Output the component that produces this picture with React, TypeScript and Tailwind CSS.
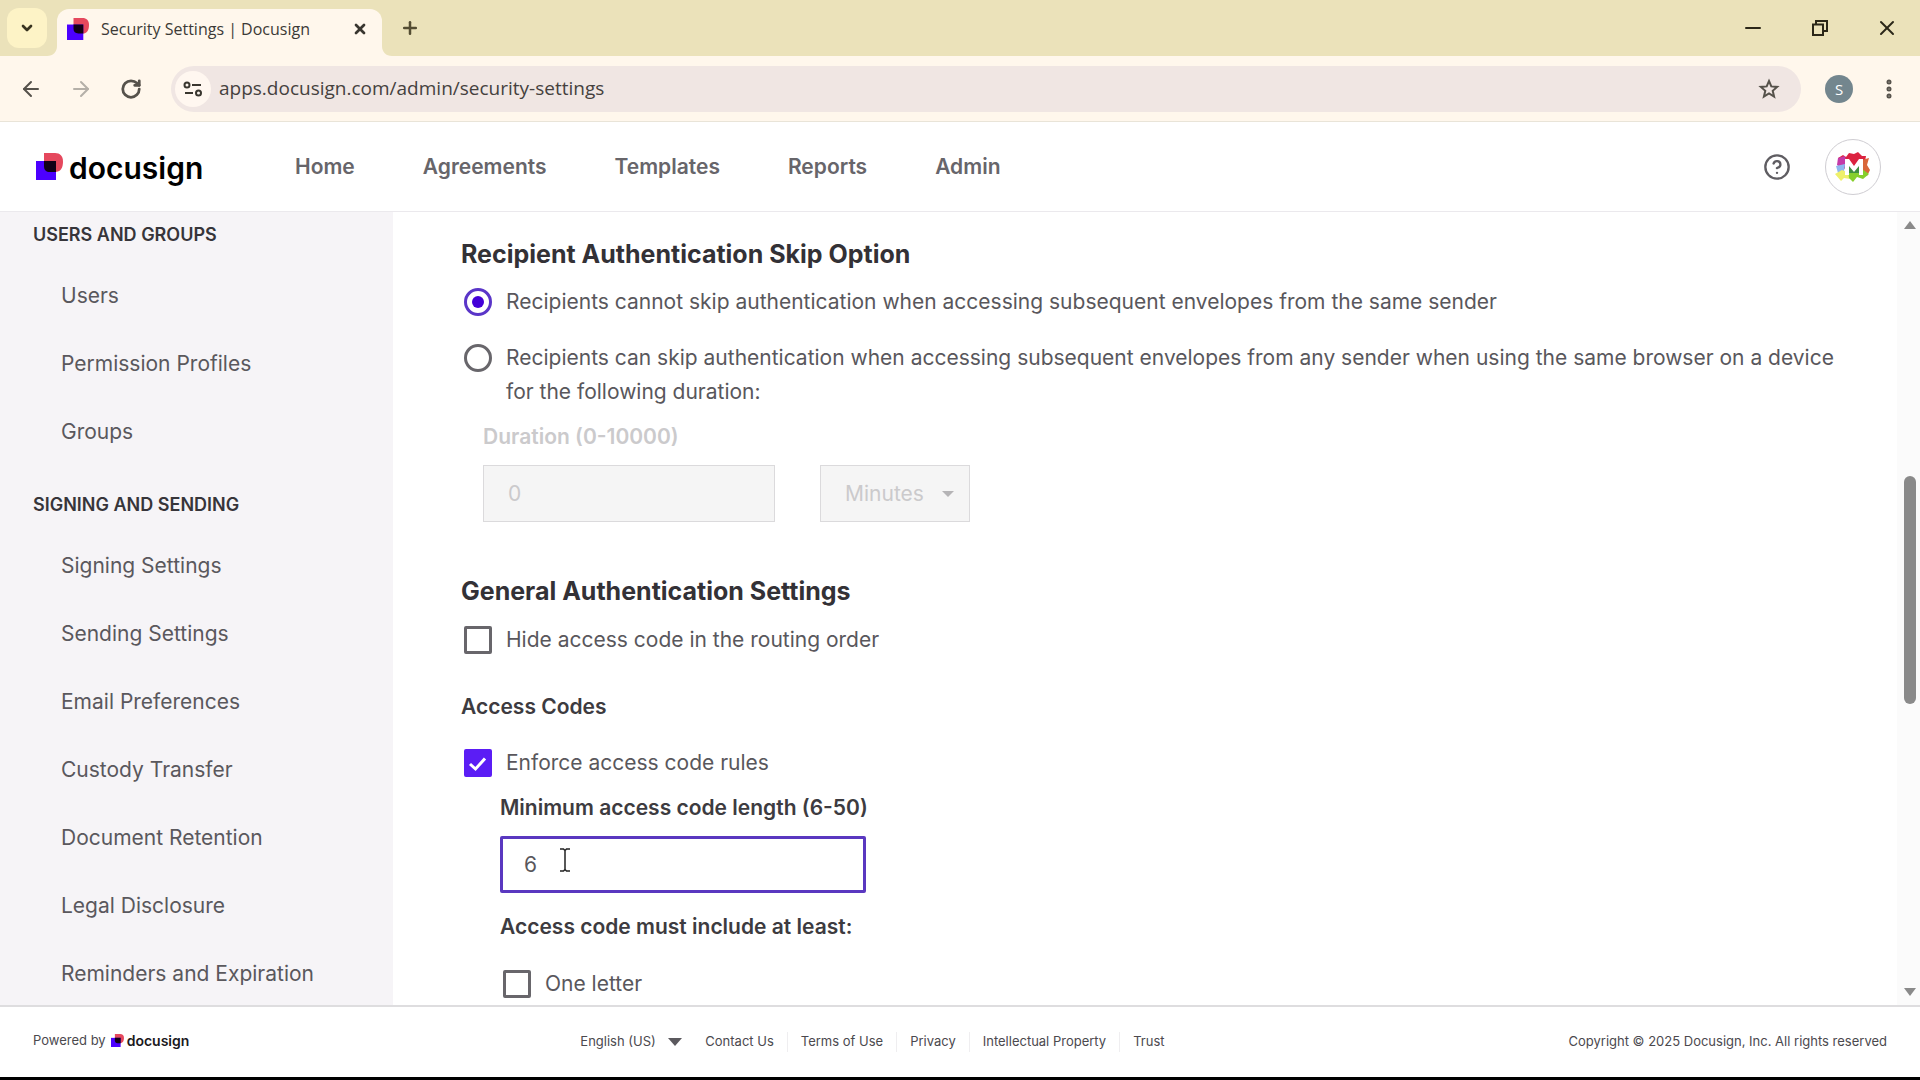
import { ArrowLeft, ArrowRight, ChevronDown, CircleHelp, EllipsisVertical, Minus, Plus, RotateCw, Star, X } from "lucide-react";

const navItems = ["Home", "Agreements", "Templates", "Reports", "Admin"];

const sidebarSections = [
  { title: "USERS AND GROUPS", items: ["Users", "Permission Profiles", "Groups"] },
  {
    title: "SIGNING AND SENDING",
    items: [
      "Signing Settings",
      "Sending Settings",
      "Email Preferences",
      "Custody Transfer",
      "Document Retention",
      "Legal Disclosure",
      "Reminders and Expiration",
    ],
  },
];

const footerLinks = ["Contact Us", "Terms of Use", "Privacy", "Intellectual Property", "Trust"];

function Mark({ className }: { className: string }) {
  return (
    <svg viewBox="0 0 27 27" className={className} aria-hidden="true">
      <path d="M8 0H19C24 0 27 3 27 8.500C27 15 24.500 19 19 19H8Z" fill="#e5485d" />
      <path d="M0 8H20V27H0Z" fill="#4c00ff" />
      <path d="M8 8H20V19H14C10 19 8 17 8 13Z" fill="#120016" />
    </svg>
  );
}

function BrowserChrome() {
  return (
    <div className="shrink-0 font-['Open_Sans',sans-serif]">
      <div className="flex h-14 items-end bg-[#ebe2ba]">
        <button aria-label="Search tabs" className="mb-2 ml-[7px] flex h-10 w-10 items-center justify-center rounded-xl bg-[#fdf3c6]">
          <ChevronDown className="h-4 w-4 text-[#39331f]" strokeWidth={4} />
        </button>
        <svg viewBox="0 0 10 10" className="h-[10px] w-[10px]" aria-hidden="true">
          <path d="M10 0V10H0C6 10 10 6 10 0Z" fill="#fff7ec" />
        </svg>
        <div className="flex h-[47px] w-[325px] items-center rounded-t-xl bg-[#fff7ec] pr-[14px] pb-2 pl-[10px]">
          <Mark className="h-[22px] w-[22px]" />
          <span className="ml-3 flex-1 text-[16px] text-[#3c3a36]">Security Settings | Docusign</span>
          <button aria-label="Close tab">
            <X className="h-4 w-4 text-[#39362f]" strokeWidth={4} />
          </button>
        </div>
        <svg viewBox="0 0 10 10" className="h-[10px] w-[10px]" aria-hidden="true">
          <path d="M0 0V10H10C4 10 0 6 0 0Z" fill="#fff7ec" />
        </svg>
        <button aria-label="New tab" className="mb-[18px] ml-2">
          <Plus className="h-5 w-5 text-[#544d33]" strokeWidth={3} />
        </button>
        <div className="mb-4 ml-auto flex items-center gap-[45px] pr-[21px] text-[#2b2718]">
          <button aria-label="Minimize">
            <Minus className="h-6 w-6" strokeWidth={2} />
          </button>
          <button aria-label="Restore">
            <svg viewBox="0 0 20 20" className="h-5 w-5" fill="none" stroke="currentColor" strokeWidth="2">
              <path d="M3 6.500H13V17H3Z" />
              <path d="M6 6V3H17V13H13.500" />
            </svg>
          </button>
          <button aria-label="Close">
            <X className="h-6 w-6" strokeWidth={2} />
          </button>
        </div>
      </div>

      <div className="flex h-[66px] items-center border-b border-[#e9e4d8] bg-[#fff7ec] pr-[19px] pl-[19px] text-[#56524b]">
        <button aria-label="Back">
          <ArrowLeft className="h-6 w-6" strokeWidth={2} />
        </button>
        <button aria-label="Forward" className="ml-[26px] text-[#b5b0a8]">
          <ArrowRight className="h-6 w-6" strokeWidth={2} />
        </button>
        <button aria-label="Reload" className="ml-[27px]">
          <RotateCw className="h-[22px] w-[22px]" strokeWidth={3} />
        </button>
        <div className="ml-[29px] flex h-[46px] flex-1 items-center rounded-full bg-[#f0e6e3] pr-[21px] pl-1">
          <button aria-label="View site information" className="flex h-9 w-9 items-center justify-center rounded-full bg-[#fff7f0]">
            <svg viewBox="0 0 20 20" className="h-5 w-5" fill="none" stroke="#39362f" strokeWidth="2">
              <circle cx="4" cy="6" r="2.500" />
              <path d="M9 6H18M2 14H10" />
              <circle cx="15.500" cy="14" r="2.500" />
            </svg>
          </button>
          <input
            aria-label="Address"
            defaultValue="apps.docusign.com/admin/security-settings"
            className="ml-2 flex-1 bg-transparent text-[19px] text-[#45413e] outline-none"
          />
          <button aria-label="Bookmark this tab">
            <svg viewBox="0 0 22 22" className="h-[22px] w-[22px]" fill="none" stroke="currentColor" strokeWidth="2">
              <path d="M11 3L13.300 8.400L19.200 8.900L14.700 12.800L16.100 18.600L11 15.500L5.900 18.600L7.300 12.800L2.800 8.900L8.700 8.400Z" />
            </svg>
          </button>
        </div>
        <button aria-label="Profile" className="ml-6 h-7 w-7 rounded-full bg-[#73868e] text-[15px] leading-7 text-white">
          S
        </button>
        <button aria-label="Menu" className="ml-6">
          <EllipsisVertical className="h-6 w-6" strokeWidth={3} />
        </button>
      </div>
    </div>
  );
}

function AccountLogo() {
  return (
    <svg viewBox="0 0 36 30" className="h-[30px] w-9" aria-hidden="true">
      <path d="M3 6L8 3L11 5L14 1L19 2L23 0L27 4L31 4L29 15L18 18L6 16Z" fill="#dc2340" />
      <path d="M3 6L10 4L12 14L8 17L2 13Z" fill="#c43aa8" />
      <path d="M1 14L10 12L9 20L3 21Z" fill="#8fb8ee" />
      <path d="M27 8L34 6L32 13L35 18L32 24L26 22Z" fill="#d9663a" />
      <path d="M0 22L7 18L14 21L15 27L9 26L6 29Z" fill="#eef06a" />
      <path d="M13 17L27 17L34 22L28 27L22 25L18 30L14 26Z" fill="#86cf2c" />
      <path d="M14 14L19 17L24 13V21H14Z" fill="#3f8f3f" />
      <path d="M10 23V7H14L19 14L24 7H28V23H24V14L19 20L14 14V23Z" fill="#fff" />
    </svg>
  );
}

function TopNav() {
  return (
    <header className="flex h-[90px] shrink-0 items-center border-b border-[#ebe9ed] bg-white pr-[39px] pl-9">
      <a href="#home" className="flex w-[259px] items-center gap-[6px]">
        <Mark className="h-[27px] w-[27px]" />
        <span className="pt-0.5 text-[30px] leading-9 font-semibold text-black">docusign</span>
      </a>
      <nav className="flex gap-[68px] text-[21px] font-semibold text-[#67656a]">
        {navItems.map((item) => (
          <a key={item} href={`#${item.toLowerCase()}`}>{item}</a>
        ))}
      </nav>
      <div className="ml-auto flex items-center gap-[34px]">
        <button aria-label="Help">
          <CircleHelp className="h-7 w-7 text-[#5f5d62]" strokeWidth={2} />
        </button>
        <button aria-label="Account" className="flex h-14 w-14 items-center justify-center rounded-full border border-[#cfcdd2]">
          <AccountLogo />
        </button>
      </div>
    </header>
  );
}

function Sidebar() {
  return (
    <aside className="flex w-[393px] shrink-0 flex-col gap-[17px] overflow-hidden bg-[#f6f4f7] pt-px">
      {sidebarSections.map((section) => (
        <section key={section.title}>
          <h2 className="mb-[5px] pl-[33px] text-[18px] leading-[44px] font-semibold text-[#37353a]">{section.title}</h2>
          <ul className="pl-[61px] text-[21px] leading-[68px] text-[#5a585d]">
            {section.items.map((item) => (
              <li key={item}>
                <a href="#settings">{item}</a>
              </li>
            ))}
          </ul>
        </section>
      ))}
    </aside>
  );
}

function Radio({ id, label, checked }: { id: string; label: string; checked?: boolean }) {
  return (
    <div className="flex gap-[14px] pl-[3px]">
      <input
        type="radio"
        id={id}
        name="skip"
        defaultChecked={checked}
        className="mt-[3px] h-7 w-7 shrink-0 appearance-none rounded-full border-3 border-[#68666b] bg-white bg-clip-content p-[5px] checked:border-[#5a35c8] checked:bg-[#4300d8]"
      />
      <label htmlFor={id}>{label}</label>
    </div>
  );
}

function Checkbox({ id, label, checked }: { id: string; label: string; checked?: boolean }) {
  return (
    <div className="flex gap-[14px] pl-[3px]">
      <span className="relative mt-[3px] h-7 w-7 shrink-0">
        <input
          type="checkbox"
          id={id}
          defaultChecked={checked}
          className="peer block h-7 w-7 appearance-none rounded-xs border-[3px] border-[#68666b] bg-white checked:border-[#5b1df5] checked:bg-[#5b1df5]"
        />
        <svg viewBox="0 0 28 28" className="pointer-events-none absolute inset-0 hidden peer-checked:block" fill="none" stroke="#fff" strokeWidth="3">
          <path d="M6 15L11.500 20L21 9.500" />
        </svg>
      </span>
      <label htmlFor={id}>{label}</label>
    </div>
  );
}

function Settings() {
  return (
    <main className="min-w-0 flex-1 overflow-hidden bg-white pt-[25px] pr-[60px] pl-[68px] text-[21px] leading-[34px] text-[#59575c]">
      <h2 className="text-[25px] font-bold text-[#333136]">Recipient Authentication Skip Option</h2>
      <div className="mt-[14px] flex flex-col gap-[22px]">
        <Radio id="no-skip" checked label="Recipients cannot skip authentication when accessing subsequent envelopes from the same sender" />
        <Radio
          id="can-skip"
          label="Recipients can skip authentication when accessing subsequent envelopes from any sender when using the same browser on a device for the following duration:"
        />
      </div>
      <div className="mt-[11px] pl-[22px] text-[#cbcacc]">
        <label htmlFor="duration" className="font-semibold">Duration (0-10000)</label>
        <div className="mt-[11px] flex gap-[45px]">
          <input id="duration" disabled defaultValue="0" className="h-[57px] w-[292px] border border-[#dbdadc] bg-[#f5f5f5] px-6" />
          <div className="relative">
            <select aria-label="Duration unit" disabled className="h-[57px] w-[150px] appearance-none border border-[#dbdadc] bg-[#f5f5f5] pl-6 opacity-100">
              <option>Minutes</option>
            </select>
            <svg viewBox="0 0 12 6" className="pointer-events-none absolute top-[26px] right-4 h-[6px] w-3" fill="#b5b4b6">
              <path d="M0 0H12L6 6Z" />
            </svg>
          </div>
        </div>
      </div>

      <h2 className="mt-[52px] text-[25px] font-bold text-[#333136]">General Authentication Settings</h2>
      <div className="mt-[15px]">
        <Checkbox id="hide-code" label="Hide access code in the routing order" />
      </div>
      <h3 className="mt-[33px] font-semibold text-[#3d3b40]">Access Codes</h3>
      <div className="mt-[22px]">
        <Checkbox id="enforce" checked label="Enforce access code rules" />
      </div>
      <div className="mt-[11px] pl-[39px]">
        <label htmlFor="min-length" className="block font-semibold text-[#3d3b40]">Minimum access code length (6-50)</label>
        <div className="relative mt-[11px] w-[366px]">
          <input id="min-length" defaultValue="6" className="block h-[57px] w-full rounded-xs border-[3px] border-[#5a38c0] px-[21px] outline-none" />
          <svg viewBox="0 0 12 24" className="pointer-events-none absolute top-3 left-[59px] h-6 w-3" fill="none" stroke="#222" strokeWidth="1.500">
            <path d="M1 1H4.500L6 2.500L7.500 1H11M6 2.500V21.500M1 23H4.500L6 21.500L7.500 23H11" />
          </svg>
        </div>
        <p className="mt-[17px] font-semibold text-[#3d3b40]">Access code must include at least:</p>
        <div className="mt-[23px]">
          <Checkbox id="one-letter" label="One letter" />
        </div>
      </div>
    </main>
  );
}

function Scrollbar() {
  return (
    <div className="flex w-[23px] shrink-0 flex-col items-center bg-[#fbfbfb] pt-[9px] pb-[9px] pl-[3px]" aria-hidden="true">
      <svg viewBox="0 0 12 8" className="h-2 w-3" fill="#8a8a8a">
        <path d="M6 0L12 8H0Z" />
      </svg>
      <div className="flex-[247]" />
      <div className="w-3 flex-[228] rounded-full bg-[#8a8a8a]" />
      <div className="flex-[284]" />
      <svg viewBox="0 0 12 8" className="h-2 w-3" fill="#8a8a8a">
        <path d="M0 0H12L6 8Z" />
      </svg>
    </div>
  );
}

function Footer() {
  return (
    <footer className="flex h-[72px] shrink-0 items-center justify-between border-t-2 border-[#dedddf] bg-white pr-[33px] pl-[33px] text-[13px] text-[#4b494e]">
      <div className="flex items-center pb-[3px]">
        Powered by
        <Mark className="ml-[5px] h-[13px] w-[13px]" />
        <span className="ml-[3px] text-[14px] font-semibold text-[#1b191d]">docusign</span>
      </div>
      <div className="flex items-center">
        <div className="relative mr-[10px]">
          <select aria-label="Language" className="appearance-none bg-transparent pr-[26px]">
            <option>English (US)</option>
          </select>
          <svg viewBox="0 0 14 8" className="pointer-events-none absolute top-[6px] right-0 h-2 w-[14px]" fill="#5b595e">
            <path d="M0 0H14L7 8Z" />
          </svg>
        </div>
        <nav className="flex divide-x divide-[#efeef0]">
          {footerLinks.map((link) => (
            <a key={link} href="#legal" className="px-[13px]">{link}</a>
          ))}
        </nav>
      </div>
      <p>Copyright © 2025 Docusign, Inc. All rights reserved</p>
    </footer>
  );
}

export default function App() {
  return (
    <div className="flex h-screen flex-col overflow-hidden border-b-3 border-black bg-white font-['Inter',sans-serif]">
      <BrowserChrome />
      <TopNav />
      <div className="flex min-h-0 flex-1">
        <Sidebar />
        <Settings />
        <Scrollbar />
      </div>
      <Footer />
    </div>
  );
}
